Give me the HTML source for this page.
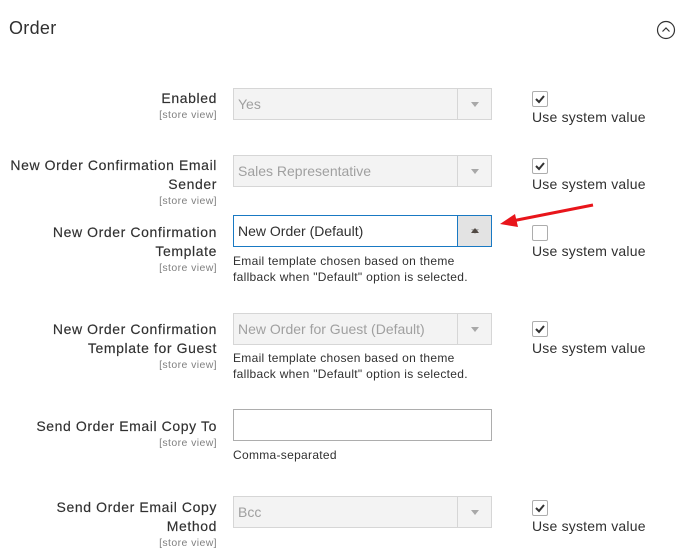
<!DOCTYPE html>
<html><head><meta charset="utf-8"><style>
*{margin:0;padding:0;box-sizing:border-box}
body{width:680px;height:553px;background:#fff;position:relative;overflow:hidden;font-family:"Liberation Sans",sans-serif;color:#303030}
.a{position:absolute;white-space:nowrap}
.lbl{position:absolute;right:463px;text-align:right;font-size:14px;line-height:19px;color:#303030;letter-spacing:0.6px;-webkit-text-stroke:0.15px #303030}
.sv{display:block;font-size:10.5px;line-height:15px;color:#808080;letter-spacing:0.4px;-webkit-text-stroke:0}
.sel{position:absolute;left:233px;width:259px;height:32px;border:1px solid #d6d6d6;background:#f3f3f3;color:#a0a0a0;font-size:14px;padding-left:4px;line-height:30px}
.sel .btn{position:absolute;right:0;top:0;width:34px;height:30px;border-left:1px solid #d6d6d6}
.sel .btn:after{content:"";position:absolute;left:13px;top:13px;border-left:4px solid transparent;border-right:4px solid transparent;border-top:5px solid #a8a8a8}
.cb{position:absolute;left:532px;width:16px;height:16px;border:1px solid #adadad;border-radius:2px;background:#fff}
.cb svg{position:absolute;left:1px;top:1px}
.use{position:absolute;left:532px;font-size:14px;color:#303030;line-height:18px;letter-spacing:0.2px}
.note{position:absolute;left:233px;font-size:12px;line-height:16px;color:#303030;letter-spacing:0.3px}
</style></head><body>
<div class="a" style="left:9px;top:18px;font-size:18px;color:#303030;letter-spacing:0.3px">Order</div>
<svg class="a" style="left:656px;top:20px" width="20" height="20"><circle cx="10" cy="10" r="8.5" fill="none" stroke="#333" stroke-width="1.2"/><path d="M6.5 11.5 L10 8 L13.5 11.5" fill="none" stroke="#333" stroke-width="1.2"/></svg>

<div class="lbl" style="top:89px">Enabled<span class="sv">[store view]</span></div>
<div class="sel" style="top:88px">Yes<div class="btn"></div></div>
<div class="cb" style="top:91px"><svg width="12" height="12"><path d="M2 6 L5 9 L10 3" fill="none" stroke="#333" stroke-width="2"/></svg></div>
<div class="use" style="top:108px">Use system value</div>

<div class="lbl" style="top:156px">New Order Confirmation Email<br>Sender<span class="sv">[store view]</span></div>
<div class="sel" style="top:155px">Sales Representative<div class="btn"></div></div>
<div class="cb" style="top:158px"><svg width="12" height="12"><path d="M2 6 L5 9 L10 3" fill="none" stroke="#333" stroke-width="2"/></svg></div>
<div class="use" style="top:175px">Use system value</div>

<div class="lbl" style="top:223px">New Order Confirmation<br>Template<span class="sv">[store view]</span></div>
<div class="sel" style="top:215px;background:#fff;border-color:#1979c3;color:#303030">New Order (Default)<div class="btn" style="background:#e3e3e3;border-color:#1979c3"></div></div>
<div class="a" style="left:471px;top:228px;border-left:4px solid transparent;border-right:4px solid transparent;border-bottom:5px solid #514943"></div>
<div class="cb" style="top:225px"></div>
<div class="use" style="top:242px">Use system value</div>
<div class="note" style="top:253px">Email template chosen based on theme<br>fallback when "Default" option is selected.</div>

<div class="lbl" style="top:320px">New Order Confirmation<br>Template for Guest<span class="sv">[store view]</span></div>
<div class="sel" style="top:313px">New Order for Guest (Default)<div class="btn"></div></div>
<div class="cb" style="top:321px"><svg width="12" height="12"><path d="M2 6 L5 9 L10 3" fill="none" stroke="#333" stroke-width="2"/></svg></div>
<div class="use" style="top:339px">Use system value</div>
<div class="note" style="top:350px">Email template chosen based on theme<br>fallback when "Default" option is selected.</div>

<div class="lbl" style="top:417px">Send Order Email Copy To<span class="sv">[store view]</span></div>
<div class="sel" style="top:409px;background:#fff;border-color:#adadad"></div>
<div class="note" style="top:447px">Comma-separated</div>

<div class="lbl" style="top:498px">Send Order Email Copy<br>Method<span class="sv">[store view]</span></div>
<div class="sel" style="top:496px">Bcc<div class="btn"></div></div>
<div class="cb" style="top:500px"><svg width="12" height="12"><path d="M2 6 L5 9 L10 3" fill="none" stroke="#333" stroke-width="2"/></svg></div>
<div class="use" style="top:517px">Use system value</div>

<svg class="a" style="left:0;top:0" width="680" height="553"><line x1="593" y1="205" x2="512" y2="221" stroke="#e8151b" stroke-width="3"/><path d="M500 224 L515 214 L518 227 Z" fill="#e8151b"/></svg>
</body></html>
